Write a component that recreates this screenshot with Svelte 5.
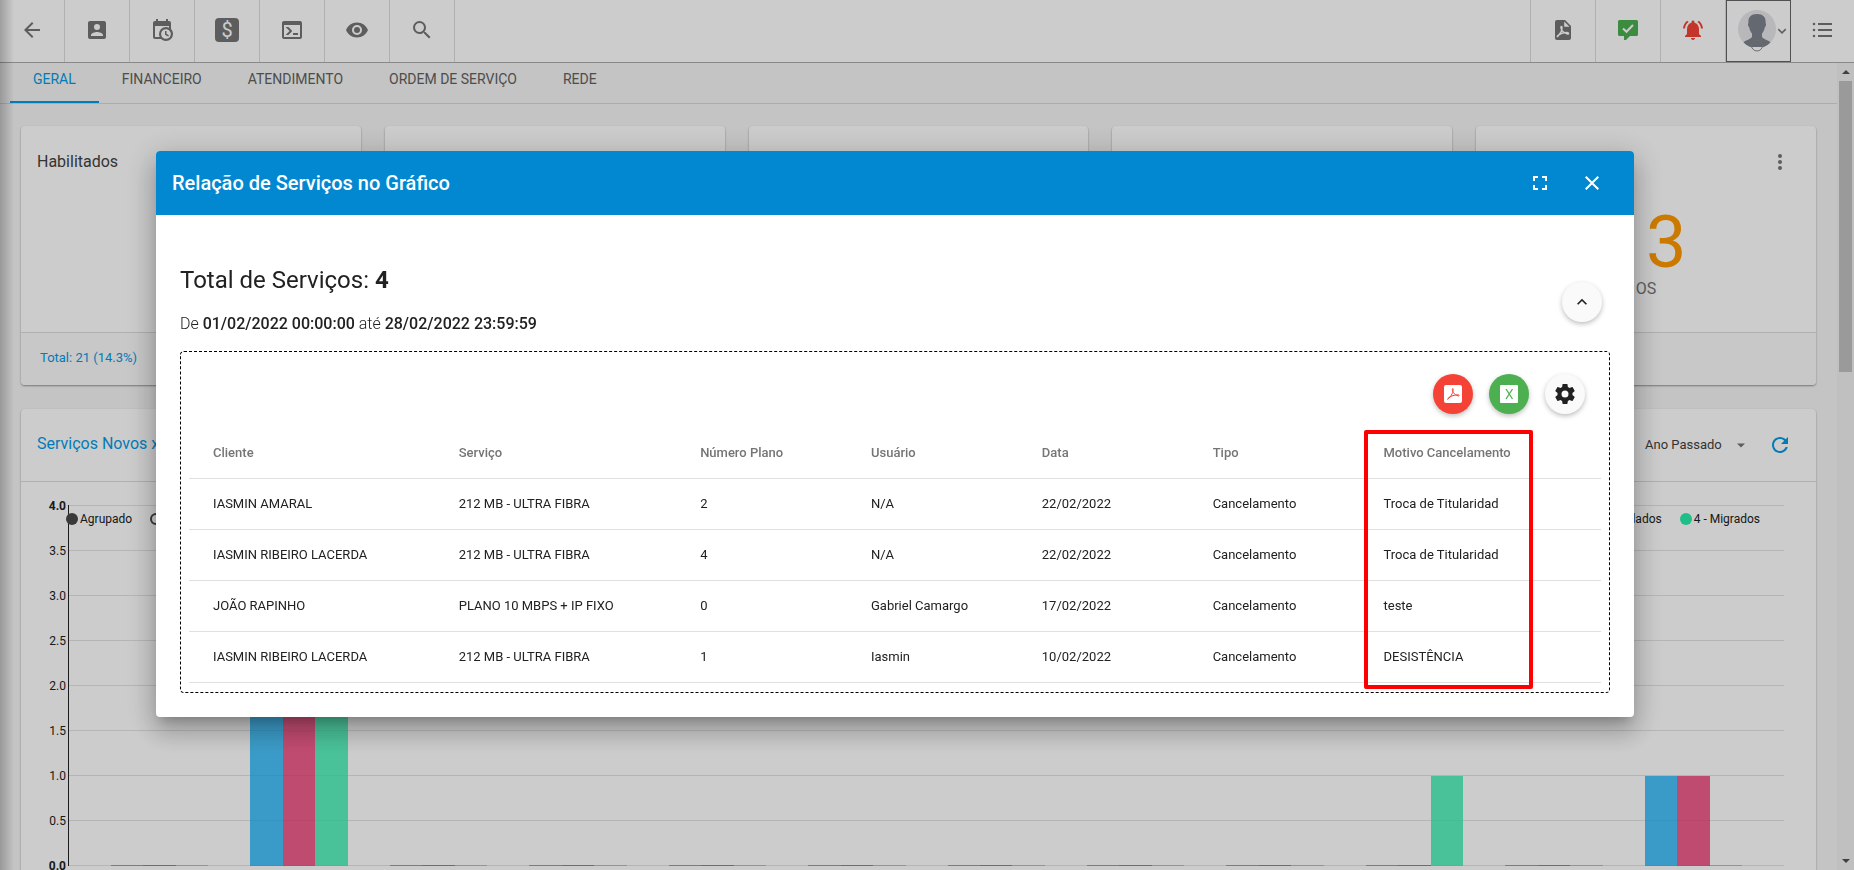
<script lang="ts">
    type Servico = {
        cliente: string,
        servico: string,
        plano: number,
        usuario: string,
        data: string,
        tipo: string,
        motivo: string
    };

    const icons = {
        back: "M20 11H7.83l5.59-5.59L12 4l-8 8 8 8 1.41-1.41L7.83 13H20v-2z",
        account: "M6,17C6,15 10,13.9 12,13.9C14,13.9 18,15 18,17V18H6M15,9A3,3 0 0,1 12,12A3,3 0 0,1 9,9A3,3 0 0,1 12,6A3,3 0 0,1 15,9M3,5V19A2,2 0 0,0 5,21H19A2,2 0 0,0 21,19V5A2,2 0 0,0 19,3H5C3.89,3 3,3.9 3,5Z",
        calendar: "M15,13H16.5V15.82L18.94,17.23L18.19,18.53L15,16.69V13M19,8H5V19H9.67C9.24,18.09 9,17.07 9,16A7,7 0 0,1 16,9C17.07,9 18.09,9.24 19,9.67V8M5,21C3.89,21 3,20.1 3,19V5C3,3.89 3.89,3 5,3H6V1H8V3H16V1H18V3H19A2,2 0 0,1 21,5V11.1C22.24,12.36 23,14.09 23,16A7,7 0 0,1 16,23C14.09,23 12.36,22.24 11.1,21H5M16,11.15A4.85,4.85 0 0,0 11.15,16C11.15,18.68 13.32,20.85 16,20.85A4.85,4.85 0 0,0 20.85,16C20.85,13.32 18.68,11.15 16,11.15Z",
        terminal: "M20,19V7H4V19H20M20,3A2,2 0 0,1 22,5V19A2,2 0 0,1 20,21H4A2,2 0 0,1 2,19V5C2,3.89 2.9,3 4,3H20M13,17V15H18V17H13M9.58,13L5.57,9H8.4L11.7,12.3C12.09,12.69 12.09,13.33 11.7,13.72L8.42,17H5.59L9.58,13Z",
        eye: "M12,9A3,3 0 0,0 9,12A3,3 0 0,0 12,15A3,3 0 0,0 15,12A3,3 0 0,0 12,9M12,17A5,5 0 0,1 7,12A5,5 0 0,1 12,7A5,5 0 0,1 17,12A5,5 0 0,1 12,17M12,4.5C7,4.5 2.73,7.61 1,12C2.73,16.39 7,19.5 12,19.5C17,19.5 21.27,16.39 23,12C21.27,7.61 17,4.5 12,4.5Z",
        search: "M9.5,3A6.5,6.5 0 0,1 16,9.5C16,11.11 15.41,12.59 14.44,13.73L14.71,14H15.5L20.5,19L19,20.5L14,15.5V14.71L13.73,14.44C12.59,15.41 11.11,16 9.5,16A6.5,6.5 0 0,1 3,9.5A6.5,6.5 0 0,1 9.5,3M9.5,5C7,5 5,7 5,9.5C5,12 7,14 9.5,14C12,14 14,12 14,9.5C14,7 12,5 9.5,5Z",
        bell: "M7.58 4.08L6.15 2.65C3.75 4.48 2.17 7.3 2.03 10.5h2c.15-2.65 1.51-4.97 3.55-6.42zm12.39 6.42h2c-.15-3.2-1.73-6.02-4.12-7.85l-1.42 1.43c2.02 1.45 3.39 3.77 3.54 6.42zM18 11c0-3.07-1.64-5.64-4.5-6.32V4c0-.83-.67-1.5-1.5-1.5s-1.5.67-1.5 1.5v.68C7.63 5.36 6 7.92 6 11v5l-2 2v1h16v-1l-2-2v-5zm-6 11c.14 0 .27-.01.4-.04.65-.14 1.18-.58 1.44-1.18.1-.24.15-.5.15-.78h-4c.01 1.1.9 2 2.01 2z",
        list: "M3 4.7a1.3 1.3 0 1 0 0 2.6 1.3 1.3 0 0 0 0-2.6zm0 6a1.3 1.3 0 1 0 0 2.6 1.3 1.3 0 0 0 0-2.6zm0 6a1.3 1.3 0 1 0 0 2.6 1.3 1.3 0 0 0 0-2.6zM7 5h14v2H7zm0 6h14v2H7zm0 6h14v2H7z",
        more: "M12 8a2 2 0 1 0 0-4 2 2 0 0 0 0 4zm0 2a2 2 0 1 0 0 4 2 2 0 0 0 0-4zm0 6a2 2 0 1 0 0 4 2 2 0 0 0 0-4z",
        refresh: "M17.65 6.35C16.2 4.9 14.21 4 12 4c-4.42 0-7.99 3.58-7.99 8s3.57 8 7.99 8c3.73 0 6.84-2.55 7.73-6h-2.08c-.82 2.33-3.04 4-5.65 4-3.31 0-6-2.69-6-6s2.69-6 6-6c1.66 0 3.14.69 4.22 1.78L13 11h7V4l-2.35 2.35z",
        fullscreen: "M5,5H10V7H7V10H5V5M14,5H19V10H17V7H14V5M17,14H19V19H14V17H17V14M10,17V19H5V14H7V17H10Z",
        close: "M19,6.41L17.59,5L12,10.59L6.41,5L5,6.41L10.59,12L5,17.59L6.41,19L12,13.41L17.59,19L19,17.59L13.41,12L19,6.41Z",
        up: "M7.41,15.41L12,10.83L16.59,15.41L18,14L12,8L6,14L7.41,15.41Z",
        cog: "M12,15.5A3.5,3.5 0 0,1 8.5,12A3.5,3.5 0 0,1 12,8.5A3.5,3.5 0 0,1 15.5,12A3.5,3.5 0 0,1 12,15.5M19.43,12.97C19.47,12.65 19.5,12.33 19.5,12C19.5,11.67 19.47,11.34 19.43,11L21.54,9.37C21.73,9.22 21.78,8.95 21.66,8.73L19.66,5.27C19.54,5.05 19.27,4.96 19.05,5.05L16.56,6.05C16.04,5.66 15.5,5.32 14.87,5.07L14.5,2.42C14.46,2.18 14.25,2 14,2H10C9.75,2 9.54,2.18 9.5,2.42L9.13,5.07C8.5,5.32 7.96,5.66 7.44,6.05L4.95,5.05C4.73,4.96 4.46,5.05 4.34,5.27L2.34,8.73C2.21,8.95 2.27,9.22 2.46,9.37L4.57,11C4.53,11.34 4.5,11.67 4.5,12C4.5,12.33 4.53,12.65 4.57,12.97L2.46,14.63C2.27,14.78 2.21,15.05 2.34,15.27L4.34,18.73C4.46,18.95 4.73,19.03 4.95,18.95L7.44,17.94C7.96,18.34 8.5,18.68 9.13,18.93L9.5,21.58C9.54,21.82 9.75,22 10,22H14C14.25,22 14.46,21.82 14.5,21.58L14.87,18.93C15.5,18.67 16.04,18.34 16.56,17.94L19.05,18.95C19.27,19.03 19.54,18.95 19.66,18.73L21.66,15.27C21.78,15.05 21.73,14.78 21.54,14.63L19.43,12.97Z"
    };

    const tabs = ["GERAL", "FINANCEIRO", "ATENDIMENTO", "ORDEM DE SERVIÇO", "REDE"];
    const columns = ["Cliente", "Serviço", "Número Plano", "Usuário", "Data", "Tipo", "Motivo Cancelamento"];

    const servicos: Servico[] = [
        { cliente: "IASMIN AMARAL", servico: "212 MB - ULTRA FIBRA", plano: 2, usuario: "N/A", data: "22/02/2022", tipo: "Cancelamento", motivo: "Troca de Titularidad" },
        { cliente: "IASMIN RIBEIRO LACERDA", servico: "212 MB - ULTRA FIBRA", plano: 4, usuario: "N/A", data: "22/02/2022", tipo: "Cancelamento", motivo: "Troca de Titularidad" },
        { cliente: "JOÃO RAPINHO", servico: "PLANO 10 MBPS + IP FIXO", plano: 0, usuario: "Gabriel Camargo", data: "17/02/2022", tipo: "Cancelamento", motivo: "teste" },
        { cliente: "IASMIN RIBEIRO LACERDA", servico: "212 MB - ULTRA FIBRA", plano: 1, usuario: "Iasmin", data: "10/02/2022", tipo: "Cancelamento", motivo: "DESISTÊNCIA" }
    ];

    const maxValue = 4;
    const ticks = ["4.0", "3.5", "3.0", "2.5", "2.0", "1.5", "1.0", "0.5", "0.0"];

    // one entry per month: novos, cancelados, migrados
    const months = [
        [0, 0, 0], [4, 4, 2], [0, 0, 0], [0, 0, 0], [0, 0, 0], [0, 0, 0],
        [0, 0, 0], [0, 0, 0], [0, 0, 0], [0, 0, 1], [0, 0, 0], [1, 1, 0]
    ];

    let open = $state(true);
    let expanded = $state(true);
    let activeTab = $state("GERAL");
</script>

{#snippet icon(path: string)}
    <svg class="icon" viewBox="0 0 24 24" aria-hidden="true"><path d={path} /></svg>
{/snippet}

<div class="app">
    <header class="topbar">
        <button aria-label="Voltar">{@render icon(icons.back)}</button>
        <button aria-label="Clientes">{@render icon(icons.account)}</button>
        <button aria-label="Agenda">{@render icon(icons.calendar)}</button>
        <button aria-label="Financeiro"><span class="money">$</span></button>
        <button aria-label="Terminal">{@render icon(icons.terminal)}</button>
        <button aria-label="Visualizar">{@render icon(icons.eye)}</button>
        <button aria-label="Buscar">{@render icon(icons.search)}</button>
        <div class="spacer"></div>
        <button aria-label="PDF">
            <svg class="icon" viewBox="0 0 24 24">
                <path d="M6 2h8l6 6v12a2 2 0 0 1-2 2H6a2 2 0 0 1-2-2V4a2 2 0 0 1 2-2z" />
                <path d="M13.200 3.500v5.300h5.300z" fill="#fff" />
                <path class="cut" d="M10.200 8c-1.200 2.500 1.300 7 6.300 8 1.500.3 1.500-1.600-.5-1.600-4 0-8 1.800-10.200 4.400M10.600 8c1.300 3-1 7.500-4.400 11" />
            </svg>
        </button>
        <button aria-label="Mensagens" class="green">
            <svg class="icon" viewBox="0 0 24 24">
                <path d="M3.500 2h17A1.500 1.500 0 0 1 22 3.500v13a1.500 1.500 0 0 1-1.500 1.500H14l-4 4H8v-4H3.500A1.500 1.500 0 0 1 2 16.500v-13A1.500 1.500 0 0 1 3.500 2z" />
                <path class="cut check" d="M7 10.500l3.500 3.300L17 7" />
            </svg>
        </button>
        <button aria-label="Notificações" class="red">{@render icon(icons.bell)}</button>
        <button aria-label="Perfil" class="profile">
            <svg class="avatar" viewBox="0 0 40 44" aria-hidden="true">
                <circle cx="20" cy="20" r="19" fill="#e6e6e9" />
                <path d="M20 5c6.500 0 9 3.500 8.600 9 .8 1 .4 3.400-.8 4.300-.6 3.200-1.600 5-2.800 6.200v3.500c1.500 2.500 6 2.700 8.500 5.500A19 19 0 0 1 6.500 33.500c2.500-2.800 7-3 8.500-5.500v-3.500c-1.200-1.200-2.200-3-2.800-6.200-1.200-.9-1.600-3.300-.8-4.300C11 8.500 13.500 5 20 5z" fill="#7d848e" />
                <path d="M15 38h10a5 5 0 0 1-10 0z" fill="#fff" />
                <circle cx="20" cy="36.500" r="5.500" fill="none" stroke="#8a8a8a" />
            </svg>
            <svg class="caret" viewBox="0 0 8 8" aria-hidden="true"><path d="M1 2.500l3 3 3-3" fill="none" stroke="#777" stroke-width="1.200" /></svg>
        </button>
        <button aria-label="Menu">{@render icon(icons.list)}</button>
    </header>

    <div class="body">
        <main>
            <nav class="tabs">
                {#each tabs as tab}
                    <button class:active={tab === activeTab} onclick={() => (activeTab = tab)}>{tab}</button>
                {/each}
            </nav>

            <div class="content">
                <section class="cards">
                    <article class="card">
                        <div class="card-body"><h2>Habilitados</h2></div>
                        <footer>Total: 21 (14.3%)</footer>
                    </article>
                    {#each [1, 2, 3] as n (n)}
                        <article class="card">
                            <div class="card-body"></div>
                            <footer></footer>
                        </article>
                    {/each}
                    <article class="card">
                        <div class="card-body">
                            <button class="more" aria-label="Opções">{@render icon(icons.more)}</button>
                            <div class="count">13</div>
                            <div class="unit">OS</div>
                        </div>
                        <footer></footer>
                    </article>
                </section>

                <section class="card chart-card">
                    <div class="chart-head">
                        <h2>Serviços Novos x</h2>
                        <select aria-label="Período">
                            <option>Ano Passado</option>
                        </select>
                        <svg class="select-arrow" viewBox="0 0 10 5" aria-hidden="true"><path d="M0 0h10L5 5z" /></svg>
                        <button class="refresh" aria-label="Atualizar">{@render icon(icons.refresh)}</button>
                    </div>
                    <div class="chart">
                        <div class="axis">
                            {#each ticks as tick, i}
                                <span class:edge={i === 0 || i === ticks.length - 1}>{tick}</span>
                            {/each}
                        </div>
                        <div class="plot">
                            <div class="grid">
                                {#each ticks as tick (tick)}
                                    <i></i>
                                {/each}
                            </div>
                            <div class="legend">
                                <span><b class="dot dark"></b>Agrupado</span>
                                <span><b class="dot ring"></b></span>
                                <span class="push">lados</span>
                                <span><b class="dot mint"></b>4 - Migrados</span>
                            </div>
                            <div class="bars">
                                {#each months as month}
                                    <div class="group">
                                        {#each month as value}
                                            <div class="bar" style="height: {(value / maxValue) * 100}%"></div>
                                        {/each}
                                    </div>
                                {/each}
                            </div>
                        </div>
                    </div>
                </section>
            </div>
        </main>
        <div class="scrollbar" aria-hidden="true">
            <svg viewBox="0 0 8 4"><path d="M0 4L4 0l4 4z" /></svg>
            <div class="thumb"></div>
            <svg viewBox="0 0 8 4"><path d="M0 0h8L4 4z" /></svg>
        </div>
    </div>
    <div class="edge-shadow"></div>
</div>

{#if open}
    <div class="backdrop">
        <div class="dialog" role="dialog" aria-labelledby="dialog-title">
            <div class="dialog-head">
                <h1 id="dialog-title">Relação de Serviços no Gráfico</h1>
                <button aria-label="Tela cheia">{@render icon(icons.fullscreen)}</button>
                <button aria-label="Fechar" onclick={() => (open = false)}>{@render icon(icons.close)}</button>
            </div>
            <div class="dialog-body">
                <div class="summary">
                    <div>
                        <p class="total">Total de Serviços: <strong>{servicos.length}</strong></p>
                        <p class="period">De <strong>01/02/2022 00:00:00</strong> até <strong>28/02/2022 23:59:59</strong></p>
                    </div>
                    <button class="fab" aria-label="Recolher" onclick={() => (expanded = !expanded)}>{@render icon(icons.up)}</button>
                </div>
                {#if expanded}
                    <div class="panel">
                        <div class="actions">
                            <button class="fab fab-pdf" aria-label="Exportar PDF">
                                <svg viewBox="0 0 20 20">
                                    <rect x="1" y="1" width="18" height="18" rx="2" fill="#fff" />
                                    <path d="M9.500 4.500c-1 2 1.500 6.500 6 7.500 1 .2 1-1.200-.5-1.200-4 0-8.500 1.700-10.500 4M10 4.500c.8 3-1.500 7.500-5.500 11" fill="none" stroke="#f44336" />
                                </svg>
                            </button>
                            <button class="fab fab-xls" aria-label="Exportar Excel">
                                <svg viewBox="0 0 20 20">
                                    <rect x="1" y="1" width="18" height="18" rx="1" fill="#fff" />
                                    <path d="M7 5l6.500 10M13.500 5L7 15" fill="none" stroke="#4caf50" stroke-width="1.300" />
                                </svg>
                            </button>
                            <button class="fab" aria-label="Configurações">{@render icon(icons.cog)}</button>
                        </div>
                        <div class="table-wrap">
                            <table>
                                <thead>
                                    <tr>
                                        {#each columns as column}
                                            <th>{column}</th>
                                        {/each}
                                    </tr>
                                </thead>
                                <tbody>
                                    {#each servicos as s}
                                        <tr>
                                            <td>{s.cliente}</td>
                                            <td>{s.servico}</td>
                                            <td>{s.plano}</td>
                                            <td>{s.usuario}</td>
                                            <td>{s.data}</td>
                                            <td>{s.tipo}</td>
                                            <td>{s.motivo}</td>
                                        </tr>
                                    {/each}
                                </tbody>
                            </table>
                            <div class="highlight"></div>
                        </div>
                    </div>
                {/if}
            </div>
        </div>
    </div>
{/if}

<style>

:global(body) {
    background: #f5f5f5;
    font-family: Roboto, "Liberation Sans", sans-serif;
    color: #212121;
}

button {
    display: flex;
    align-items: center;
    justify-content: center;
    padding: 0;
    border: 0;
    background: none;
    font: inherit;
    color: inherit;
    cursor: pointer;
}

h1, h2, p {
    margin: 0;
    font-weight: 400;
}

.icon {
    width: 24px;
    height: 24px;
    fill: currentColor;
}

.app {
    position: relative;
    display: flex;
    flex-direction: column;
    height: 100vh;
    overflow: hidden;
}

.edge-shadow {
    position: absolute;
    top: 0;
    bottom: 0;
    left: 0;
    width: 14px;
    background: linear-gradient(to right, rgba(0, 0, 0, 0.22), rgba(0, 0, 0, 0));
}

/* top bar */

.topbar {
    display: flex;
    flex: none;
    height: 62px;
    background: #fff;
    border-bottom: 1px solid #aaa;
    color: #757575;
}

.topbar button {
    box-sizing: border-box;
    width: 65px;
    padding-bottom: 2px;
    border-right: 1px solid #dcdcdc;
}

.topbar button:last-child {
    width: 63px;
    border-right: 0;
}

.spacer {
    flex: 1;
    border-right: 1px solid #dcdcdc;
}

.money {
    width: 24px;
    height: 24px;
    border-radius: 4px;
    background: #757575;
    color: #fff;
    font-size: 20px;
    line-height: 24px;
}

.cut {
    fill: none;
    stroke: #fff;
    stroke-width: 1.500;
}

.check {
    stroke-width: 2;
}

.topbar .green {
    color: #4caf50;
}

.topbar .red {
    color: #f44336;
}

.topbar .profile {
    border: 1px solid #666;
    padding-left: 6px;
    padding-bottom: 0;
}

.avatar {
    width: 40px;
    height: 44px;
}

.caret {
    width: 10px;
    height: 10px;
}

/* page */

.body {
    display: flex;
    flex: 1;
    min-height: 0;
}

main {
    flex: 1;
    min-width: 0;
    overflow: hidden;
}

.tabs {
    display: flex;
    height: 40px;
    padding-left: 10px;
    border-bottom: 1px solid #d8d8d8;
    font-size: 14px;
    color: #616161;
}

.tabs button {
    padding: 0 23px 6px;
    border-bottom: 2px solid transparent;
}

.tabs .active {
    color: #039be5;
    border-color: #039be5;
}

.content {
    display: flex;
    flex-direction: column;
    gap: 24px;
    padding: 22px 21px;
}

.cards {
    display: grid;
    grid-template-columns: repeat(5, 1fr);
    gap: 24px;
}

.card {
    background: #fff;
    border-radius: 4px;
    box-shadow: 0 1px 2px rgba(0, 0, 0, 0.4);
}

.card h2 {
    font-size: 16px;
    line-height: 24px;
}

.card-body {
    position: relative;
    box-sizing: border-box;
    height: 206px;
    padding: 24px 16px;
    color: #424242;
}

.card footer {
    box-sizing: border-box;
    height: 53px;
    padding: 0 19px;
    border-top: 1px solid #dcdcdc;
    border-radius: 0 0 4px 4px;
    background: #fafafa;
    font-size: 13px;
    line-height: 49px;
    color: #039be5;
}

.more {
    position: absolute;
    top: 24px;
    right: 24px;
    color: #757575;
}

.count {
    padding-top: 56px;
    text-align: center;
    font-size: 72px;
    line-height: 74px;
    color: #ff9800;
}

.unit {
    text-align: center;
    font-size: 16px;
    line-height: 18px;
    color: #757575;
}

.chart-head {
    display: flex;
    align-items: center;
    height: 72px;
    padding: 0 24px 0 16px;
    border-bottom: 1px solid #dcdcdc;
}

.chart-head h2 {
    flex: 1;
    padding-bottom: 2px;
    color: #039be5;
}

select {
    appearance: none;
    width: 92px;
    padding: 0 0 2px;
    border: 0;
    background: none;
    font: 13px Roboto, "Liberation Sans", sans-serif;
    color: #424242;
}

.select-arrow {
    width: 8px;
    height: 5px;
    fill: #757575;
}

.refresh {
    margin-left: 23px;
    color: #039be5;
}

.chart {
    display: flex;
    padding: 20px 32px 80px 16px;
}

.axis {
    display: flex;
    flex-direction: column;
    gap: 37px;
    width: 29px;
    padding-right: 2px;
    font-size: 12px;
    line-height: 8px;
    text-align: right;
}

.axis .edge {
    font-weight: 700;
}

.plot {
    position: relative;
    flex: 1;
    height: 361px;
    margin-top: 3px;
    box-sizing: border-box;
    border-left: 1px solid #222;
}

.grid {
    display: flex;
    flex-direction: column;
    justify-content: space-between;
    height: 100%;
}

.grid i {
    height: 1px;
    background: #e3e3e3;
}

.legend {
    position: absolute;
    top: 6px;
    left: -3px;
    right: 24px;
    display: flex;
    gap: 18px;
    font-size: 12px;
    line-height: 16px;
}

.legend span {
    display: flex;
    align-items: center;
    gap: 2px;
}

.legend .push {
    margin-left: auto;
}

.dot {
    box-sizing: border-box;
    width: 12px;
    height: 12px;
    border-radius: 50%;
}

.dark {
    background: #484848;
}

.ring {
    border: 2px solid #484848;
}

.mint {
    background: #26eeab;
}

.bars {
    position: absolute;
    inset: 0;
    display: flex;
    gap: 42px;
    padding: 0 42px;
}

.group {
    display: flex;
    flex: 1;
    align-items: flex-end;
}

.bar {
    flex: 1;
    min-height: 1px;
    background: #0eaef8;
    opacity: 0.75;
}

.bar:nth-child(2) {
    background: #ec2867;
}

.bar:nth-child(3) {
    background: #26eeab;
}

.scrollbar {
    display: flex;
    flex-direction: column;
    align-items: center;
    width: 17px;
    background: #f1f1f1;
}

.scrollbar svg {
    width: 8px;
    height: 4px;
    padding: 7px 0;
    fill: #505050;
}

.thumb {
    width: 13px;
    height: 36%;
    margin-bottom: auto;
    background: #c1c1c1;
}

/* dialog */

.backdrop {
    position: fixed;
    inset: 0;
    padding: 151px 220px 0 156px;
    background: rgba(0, 0, 0, 0.2);
}

.dialog {
    overflow: hidden;
    border-radius: 4px;
    background: #fff;
    box-shadow: 0 8px 10px -5px rgba(0, 0, 0, 0.2), 0 16px 24px 2px rgba(0, 0, 0, 0.14), 0 6px 30px 5px rgba(0, 0, 0, 0.16);
}

.dialog-head {
    display: flex;
    align-items: center;
    gap: 28px;
    height: 64px;
    padding: 0 30px 0 16px;
    background: #0288d1;
    color: #fff;
}

.dialog-head h1 {
    flex: 1;
    font-size: 20px;
    font-weight: 500;
}

.dialog-body {
    padding: 48px 24px 24px;
}

.summary {
    display: flex;
    align-items: center;
    justify-content: space-between;
    padding-right: 8px;
    margin-bottom: 15px;
}

.summary .fab {
    margin-top: 4px;
}

.total {
    font-size: 24px;
    line-height: 34px;
}

.period {
    margin-top: 15px;
    font-size: 16px;
    font-weight: 300;
    line-height: 24px;
}

.total strong {
    font-weight: 700;
}

.period strong {
    font-weight: 500;
}

.fab {
    width: 40px;
    height: 40px;
    border-radius: 50%;
    background: #fafafa;
    box-shadow: 0 2px 5px rgba(0, 0, 0, 0.26);
}

.fab svg {
    width: 20px;
    height: 20px;
}

.actions .fab:last-child svg {
    width: 24px;
    height: 24px;
}

.fab-pdf {
    background: #f44336;
}

.fab-xls {
    background: #4caf50;
}

.panel {
    padding: 0 8px 9px;
    border: 1px dashed #000;
    border-radius: 4px;
}

.actions {
    display: flex;
    justify-content: flex-end;
    gap: 16px;
    padding: 22px 16px 13px;
}

.table-wrap {
    position: relative;
}

table {
    width: 100%;
    table-layout: fixed;
    border-collapse: collapse;
    font-size: 13px;
}

th, td {
    box-sizing: border-box;
    height: 51px;
    padding: 0 0 0 24px;
    border-bottom: 1px solid #e0e0e0;
    text-align: left;
    white-space: nowrap;
}

th {
    width: 12.1%;
    font-weight: 500;
    color: #757575;
}

th:first-child {
    width: 17.4%;
}

th:nth-child(2), th:last-child {
    width: 17.1%;
}

.highlight {
    position: absolute;
    top: 3px;
    right: 68px;
    bottom: -6px;
    width: 161px;
    border: 4px solid #f00;
    border-radius: 2px;
    pointer-events: none;
}

</style>
